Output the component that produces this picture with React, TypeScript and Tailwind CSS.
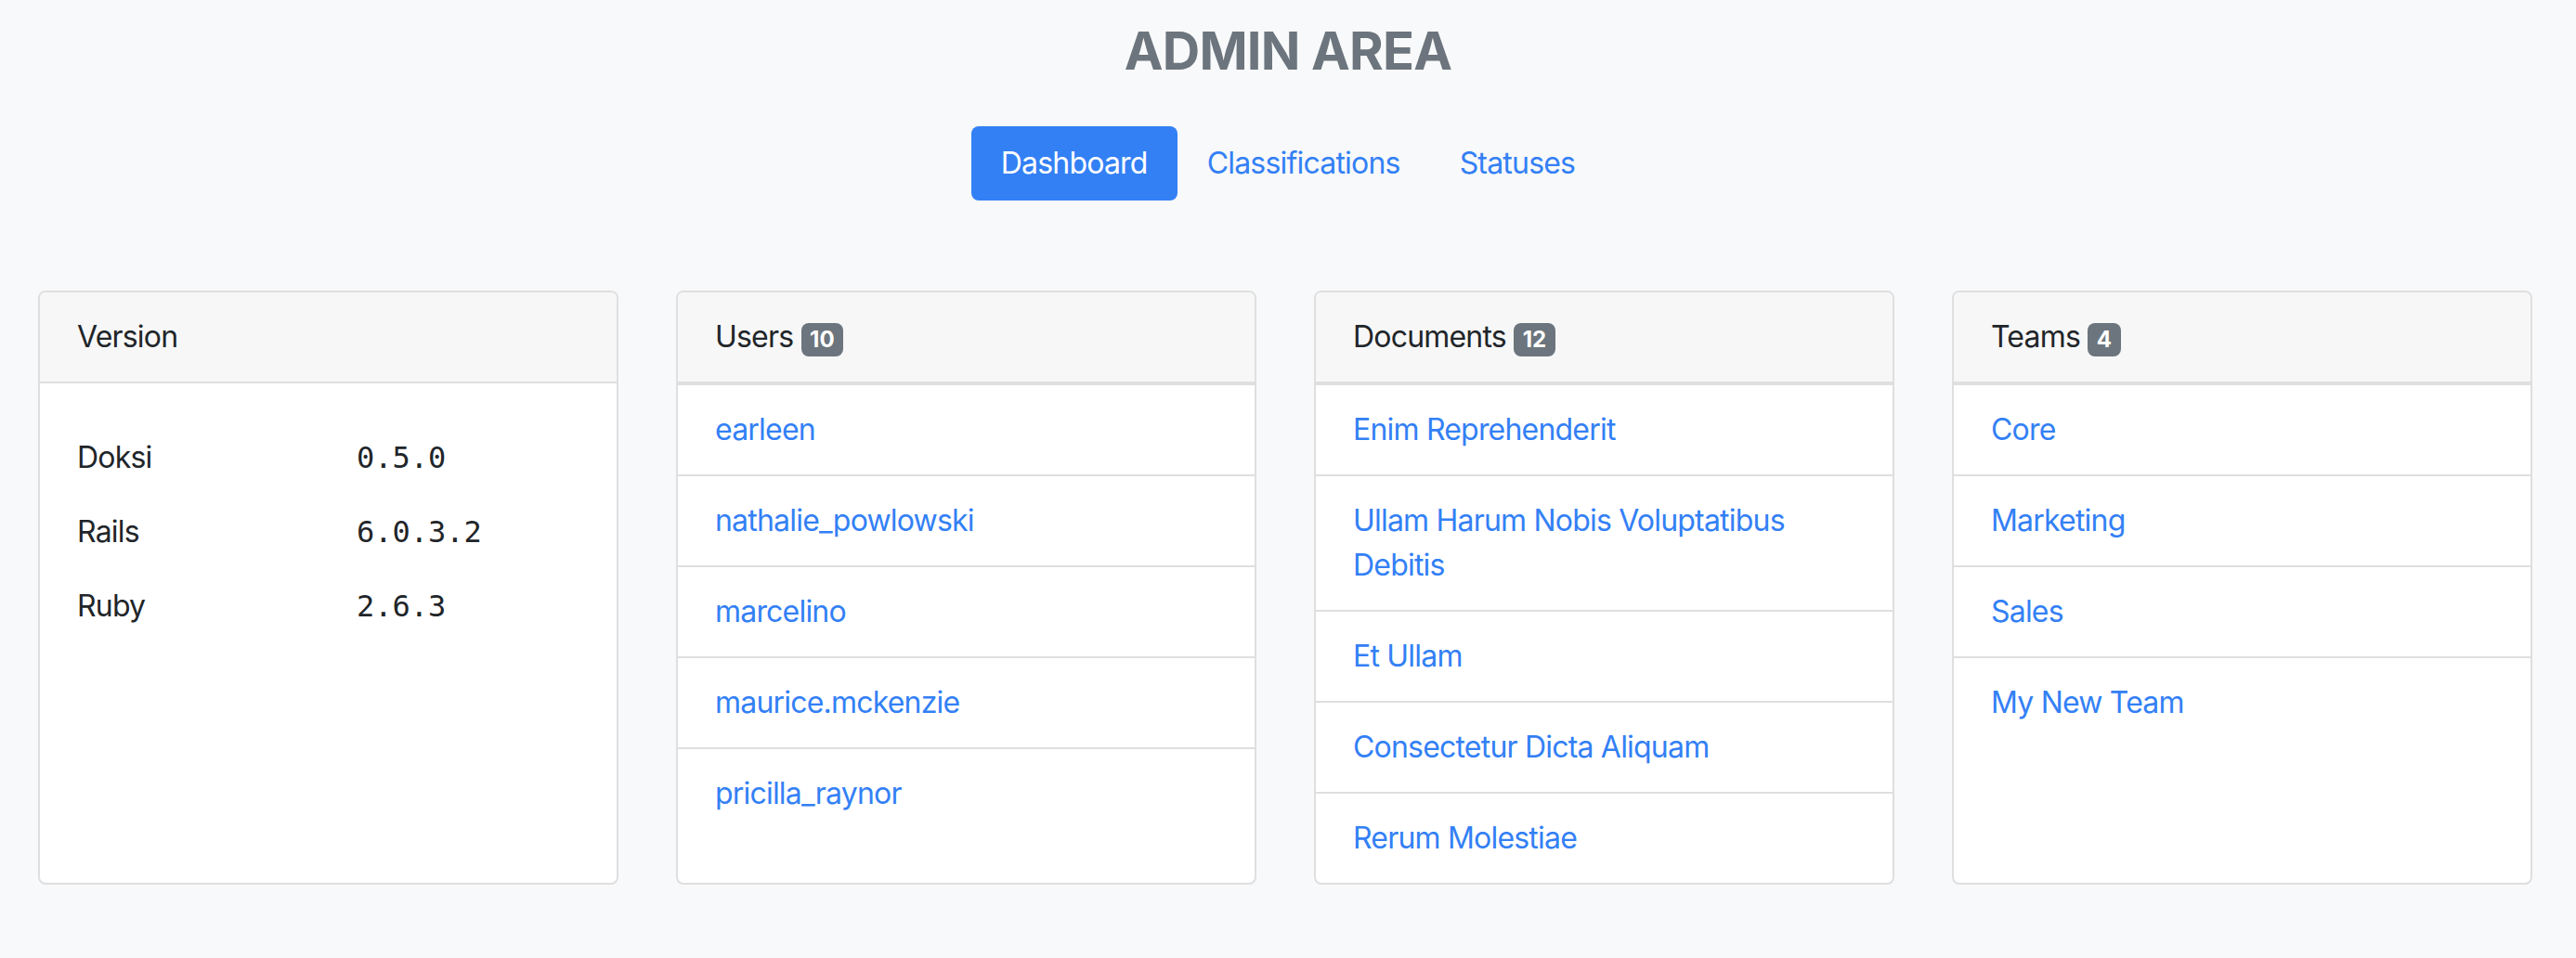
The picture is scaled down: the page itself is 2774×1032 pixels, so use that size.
const users = ["earleen", "nathalie_powlowski", "marcelino", "maurice.mckenzie", "pricilla_raynor"];
const documents = [
  "Enim Reprehenderit",
  "Ullam Harum Nobis Voluptatibus Debitis",
  "Et Ullam",
  "Consectetur Dicta Aliquam",
  "Rerum Molestiae",
];
const teams = ["Core", "Marketing", "Sales", "My New Team"];
const versions = [
  { name: "Doksi", value: "0.5.0" },
  { name: "Rails", value: "6.0.3.2" },
  { name: "Ruby", value: "2.6.3" },
];

function Badge({ count }: { count: number }) {
  return (
    <span className="inline-block rounded-[8px] bg-[#6c757d] px-[9.6px] py-[6px] align-baseline text-[24px] leading-none font-bold tracking-normal text-white">
      {count}
    </span>
  );
}

function CardHeader({ title, count }: { title: string; count?: number }) {
  return (
    <div className="border-b-2 border-[#dfdfdf] bg-[#f7f7f7] px-[40px] py-[24px]">
      {title}
      {count !== undefined && (
        <>
          {" "}
          <Badge count={count} />
        </>
      )}
    </div>
  );
}

function LinkList({ items }: { items: string[] }) {
  return (
    <ul className="border-t-2 border-[#dfdfdf]">
      {items.map((item) => (
        <li key={item} className="border-b-2 border-[#dfdfdf] px-[40px] py-[24px] last:border-b-0">
          <a href="#" className="text-[#3380f5]">
            {item}
          </a>
        </li>
      ))}
    </ul>
  );
}

export default function App() {
  return (
    <div className="min-h-screen bg-[#f8f9fa] pb-[80px] font-['Inter',sans-serif] text-[32px] leading-[48px] tracking-[-0.025em] text-[#212529]">
      <h1 className="pt-[22px] text-center text-[56px] leading-[67px] font-bold text-[#6c757d]">ADMIN AREA</h1>

      {/* Nav */}
      <nav className="mt-[47px] flex justify-center">
        <a href="#" className="rounded-[8px] bg-[#3380f5] px-[32px] py-[16px] text-white">
          Dashboard
        </a>
        <a href="#" className="px-[32px] py-[16px] text-[#3380f5]">
          Classifications
        </a>
        <a href="#" className="px-[32px] py-[16px] text-[#3380f5]">
          Statuses
        </a>
      </nav>

      {/* Cards */}
      <div className="mt-[97px] grid grid-cols-4 gap-[62px] pr-[47px] pl-[41px]">
        <div className="flex flex-col overflow-hidden rounded-[8px] border-2 border-[#dfdfdf] bg-white">
          <CardHeader title="Version" />
          <div className="grid grid-cols-[301px_1fr] gap-y-[32px] px-[40px] pt-[56px]">
            {versions.map((v) => (
              <div key={v.name} className="contents">
                <div>{v.name}</div>
                <div className="font-['DejaVu_Sans_Mono',monospace] tracking-normal">{v.value}</div>
              </div>
            ))}
          </div>
        </div>

        <div className="flex flex-col overflow-hidden rounded-[8px] border-2 border-[#dfdfdf] bg-white">
          <CardHeader title="Users" count={10} />
          <LinkList items={users} />
        </div>

        <div className="flex flex-col overflow-hidden rounded-[8px] border-2 border-[#dfdfdf] bg-white">
          <CardHeader title="Documents" count={12} />
          <LinkList items={documents} />
        </div>

        <div className="flex flex-col overflow-hidden rounded-[8px] border-2 border-[#dfdfdf] bg-white">
          <CardHeader title="Teams" count={4} />
          <LinkList items={teams} />
        </div>
      </div>
    </div>
  );
}
